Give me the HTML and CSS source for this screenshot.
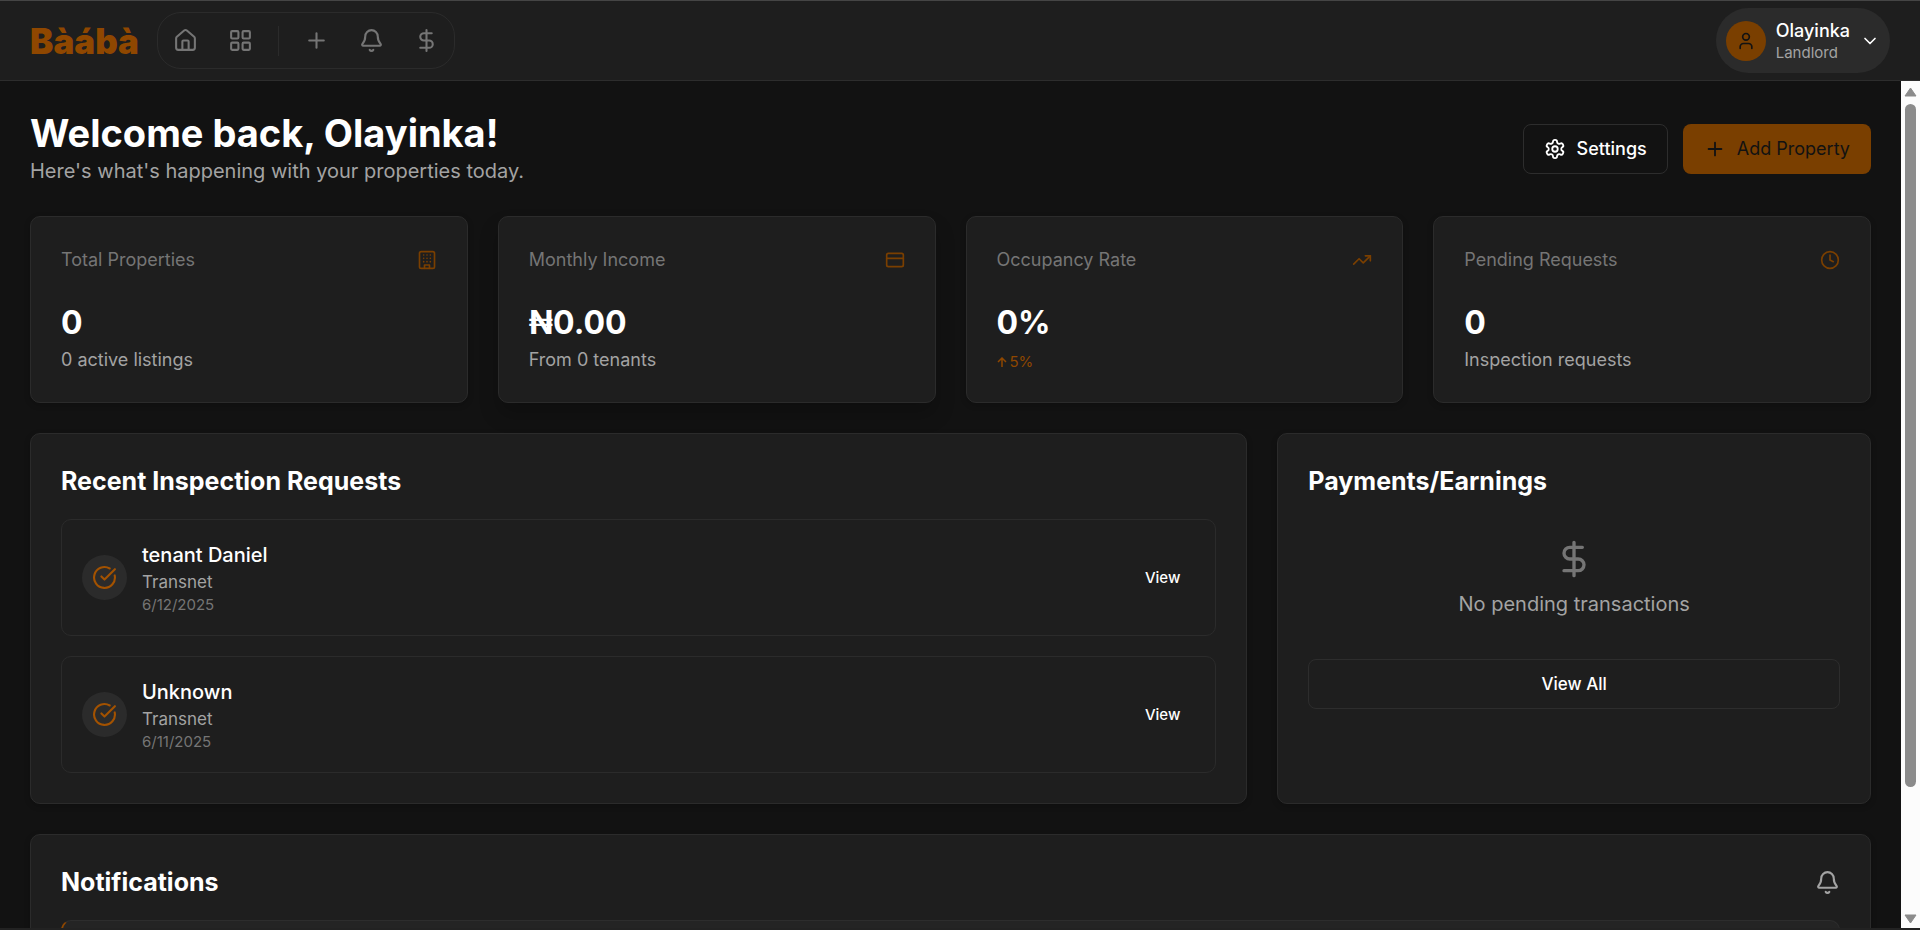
FILE: index.html
```
<!DOCTYPE html>
<html lang="en">
<head>
    <meta charset="UTF-8">
    <meta name="viewport" content="width=device-width, initial-scale=1.0">
    <title>Bàábà - Landlord Dashboard</title>
    <link rel="stylesheet" href="styles.css">
</head>
<body>
    <!-- shared icons -->
    <svg class="icon-defs" aria-hidden="true">
        <symbol id="icon-plus" viewBox="0 0 24 24"><path d="M5 12h14M12 5v14"/></symbol>
        <symbol id="icon-bell" viewBox="0 0 24 24"><path d="M10.27 21a2 2 0 0 0 3.46 0"/><path d="M3.26 15.33A1 1 0 0 0 4 17h16a1 1 0 0 0 .74-1.67C19.41 13.96 18 12.5 18 8A6 6 0 0 0 6 8c0 4.5-1.41 5.96-2.74 7.33"/></symbol>
        <symbol id="icon-dollar" viewBox="0 0 24 24"><path d="M12 2v20M17 5H9.5a3.5 3.5 0 0 0 0 7h5a3.5 3.5 0 0 1 0 7H6"/></symbol>
        <symbol id="icon-check" viewBox="0 0 24 24"><path d="M21.8 10A10 10 0 1 1 17 3.34"/><path d="m9 11 3 3L22 4"/></symbol>
    </svg>

    <header class="topbar">
        <a href="#" class="logo">Bàábà</a>
        <nav class="nav-pill" aria-label="Main">
            <a href="#" class="nav-btn" aria-label="Home">
                <svg class="icon" viewBox="0 0 24 24"><path d="M15 21v-8a1 1 0 0 0-1-1h-4a1 1 0 0 0-1 1v8"/><path d="M3 10a2 2 0 0 1 .71-1.53l7-6a2 2 0 0 1 2.58 0l7 6A2 2 0 0 1 21 10v9a2 2 0 0 1-2 2H5a2 2 0 0 1-2-2z"/></svg>
            </a>
            <a href="#" class="nav-btn" aria-label="Dashboard">
                <svg class="icon" viewBox="0 0 24 24"><rect x="3" y="3" width="7" height="7" rx="1"/><rect x="14" y="3" width="7" height="7" rx="1"/><rect x="3" y="14" width="7" height="7" rx="1"/><rect x="14" y="14" width="7" height="7" rx="1"/></svg>
            </a>
            <span class="nav-divider"></span>
            <a href="#" class="nav-btn" aria-label="Add property"><svg class="icon"><use href="#icon-plus"/></svg></a>
            <a href="#" class="nav-btn" aria-label="Notifications"><svg class="icon"><use href="#icon-bell"/></svg></a>
            <a href="#" class="nav-btn" aria-label="Payments"><svg class="icon"><use href="#icon-dollar"/></svg></a>
        </nav>
        <button type="button" class="user-menu">
            <span class="avatar">
                <svg class="icon icon-sm" viewBox="0 0 24 24"><path d="M19 21v-2a4 4 0 0 0-4-4H9a4 4 0 0 0-4 4v2"/><circle cx="12" cy="7" r="4"/></svg>
            </span>
            <span class="user-info">
                <span class="user-name">Olayinka</span>
                <span class="user-role">Landlord</span>
            </span>
            <svg class="icon icon-sm" viewBox="0 0 24 24"><path d="m6 9 6 6 6-6"/></svg>
        </button>
    </header>

    <div class="viewport">
        <main class="content">
            <section class="welcome">
                <div>
                    <h1>Welcome back, Olayinka!</h1>
                    <p class="subtitle">Here's what's happening with your properties today.</p>
                </div>
                <div class="actions">
                    <button type="button" class="btn btn-outline">
                        <svg class="icon icon-md" viewBox="0 0 24 24"><path d="M12.22 2h-.44a2 2 0 0 0-2 2v.18a2 2 0 0 1-1 1.73l-.43.25a2 2 0 0 1-2 0l-.15-.08a2 2 0 0 0-2.73.73l-.22.38a2 2 0 0 0 .73 2.73l.15.1a2 2 0 0 1 1 1.72v.51a2 2 0 0 1-1 1.74l-.15.09a2 2 0 0 0-.73 2.73l.22.38a2 2 0 0 0 2.73.73l.15-.08a2 2 0 0 1 2 0l.43.25a2 2 0 0 1 1 1.73V20a2 2 0 0 0 2 2h.44a2 2 0 0 0 2-2v-.18a2 2 0 0 1 1-1.73l.43-.25a2 2 0 0 1 2 0l.15.08a2 2 0 0 0 2.73-.73l.22-.39a2 2 0 0 0-.73-2.73l-.15-.08a2 2 0 0 1-1-1.74v-.5a2 2 0 0 1 1-1.74l.15-.09a2 2 0 0 0 .73-2.73l-.22-.38a2 2 0 0 0-2.73-.73l-.15.08a2 2 0 0 1-2 0l-.43-.25a2 2 0 0 1-1-1.73V4a2 2 0 0 0-2-2z"/><circle cx="12" cy="12" r="3"/></svg>
                        Settings
                    </button>
                    <button type="button" class="btn btn-primary">
                        <svg class="icon icon-md"><use href="#icon-plus"/></svg>
                        Add Property
                    </button>
                </div>
            </section>

            <section class="stats">
                <article class="card stat">
                    <div class="stat-head">
                        <h2>Total Properties</h2>
                        <svg class="icon icon-sm" viewBox="0 0 24 24"><rect x="3" y="2" width="18" height="20" rx="2"/><path d="M9 22v-4h6v4M8 6h.01M12 6h.01M16 6h.01M8 10h.01M12 10h.01M16 10h.01M8 14h.01M12 14h.01M16 14h.01"/></svg>
                    </div>
                    <p class="stat-value">0</p>
                    <p class="stat-note">0 active listings</p>
                </article>
                <article class="card stat stat-raised">
                    <div class="stat-head">
                        <h2>Monthly Income</h2>
                        <svg class="icon icon-sm" viewBox="0 0 24 24"><rect x="2" y="4" width="20" height="16" rx="2"/><path d="M2 10h20"/></svg>
                    </div>
                    <p class="stat-value">₦0.00</p>
                    <p class="stat-note">From 0 tenants</p>
                </article>
                <article class="card stat">
                    <div class="stat-head">
                        <h2>Occupancy Rate</h2>
                        <svg class="icon icon-sm" viewBox="0 0 24 24"><path d="M22 7l-8.5 8.5-5-5L2 17"/><path d="M16 7h6v6"/></svg>
                    </div>
                    <p class="stat-value">0%</p>
                    <p class="stat-trend">
                        <svg class="trend-arrow" viewBox="0 0 10 10"><path d="M5 10V1M1 5l4-4 4 4"/></svg>
                        5%
                    </p>
                </article>
                <article class="card stat">
                    <div class="stat-head">
                        <h2>Pending Requests</h2>
                        <svg class="icon icon-sm" viewBox="0 0 24 24"><circle cx="12" cy="12" r="10"/><path d="M12 6v6l4 2"/></svg>
                    </div>
                    <p class="stat-value">0</p>
                    <p class="stat-note">Inspection requests</p>
                </article>
            </section>

            <div class="panels">
                <section class="card panel-wide">
                    <h2 class="panel-title">Recent Inspection Requests</h2>
                    <ul class="request-list">
                        <li class="request">
                            <span class="request-icon"><svg class="icon"><use href="#icon-check"/></svg></span>
                            <div class="request-info">
                                <h3>tenant Daniel</h3>
                                <p class="request-place">Transnet</p>
                                <p class="request-date">6/12/2025</p>
                            </div>
                            <button type="button" class="btn-view">View</button>
                        </li>
                        <li class="request">
                            <span class="request-icon"><svg class="icon"><use href="#icon-check"/></svg></span>
                            <div class="request-info">
                                <h3>Unknown</h3>
                                <p class="request-place">Transnet</p>
                                <p class="request-date">6/11/2025</p>
                            </div>
                            <button type="button" class="btn-view">View</button>
                        </li>
                    </ul>
                </section>

                <section class="card">
                    <h2 class="panel-title">Payments/Earnings</h2>
                    <div class="empty">
                        <svg class="icon icon-lg"><use href="#icon-dollar"/></svg>
                        <p>No pending transactions</p>
                    </div>
                    <button type="button" class="btn btn-outline btn-block">View All</button>
                </section>
            </div>

            <section class="card">
                <div class="notif-head">
                    <h2 class="panel-title">Notifications</h2>
                    <svg class="icon"><use href="#icon-bell"/></svg>
                </div>
                <div class="notif-item"></div>
            </section>
        </main>

        <div class="scrollbar" aria-hidden="true">
            <svg class="scroll-arrow" viewBox="0 0 13 10"><path d="M6.5 1 12 9H1z"/></svg>
            <div class="scroll-track"><div class="scroll-thumb"></div></div>
            <svg class="scroll-arrow" viewBox="0 0 13 10"><path d="M6.5 9 12 1H1z"/></svg>
        </div>
    </div>
</body>
</html>
```
FILE: styles.css
```
* {
    box-sizing: border-box;
    margin: 0;
    padding: 0;
}
body {
    display: flex;
    flex-direction: column;
    height: 100vh;
    overflow: hidden;
    border-top: 1px solid #454545;
    border-bottom: 2px solid #222222;
    background-color: #121212;
    color: #ffffff;
    font-family: Inter, "Noto Sans", sans-serif;
    font-size: 17px;
}
button {
    font-family: inherit;
    color: inherit;
    border: none;
    background: none;
    cursor: pointer;
}
a {
    color: inherit;
    text-decoration: none;
}
ul {
    list-style: none;
}

/* icons */
.icon-defs {
    display: none;
}
.icon {
    width: 25px;
    height: 25px;
    flex-shrink: 0;
    fill: none;
    stroke: currentColor;
    stroke-width: 2;
    stroke-linecap: round;
    stroke-linejoin: round;
}
.icon-sm {
    width: 20px;
    height: 20px;
}
.icon-md {
    width: 22px;
    height: 22px;
}
.icon-lg {
    width: 40px;
    height: 40px;
}

/* top bar */
.topbar {
    display: flex;
    align-items: center;
    flex-shrink: 0;
    height: 80px;
    padding: 0 30px;
    background-color: #1e1e1e;
    border-bottom: 1px solid #2d2d2d;
}
.logo {
    color: #8f4700;
    font-size: 35px;
    font-weight: 900;
    line-height: 40px;
    margin-right: 18px;
}
.nav-pill {
    display: flex;
    align-items: center;
    gap: 10px;
    padding: 5px;
    border: 1px solid #2b2b2b;
    border-radius: 24px;
    color: #757575;
}
.nav-btn {
    display: flex;
    padding: 10px;
}
.nav-divider {
    width: 1px;
    height: 30px;
    margin: 0 5px;
    background-color: #2b2b2b;
}
.user-menu {
    display: flex;
    align-items: center;
    gap: 10px;
    margin-left: auto;
    padding: 10px;
    border-radius: 33px;
    background-color: #2b2b2b;
    text-align: left;
}
.avatar {
    display: flex;
    align-items: center;
    justify-content: center;
    width: 40px;
    height: 40px;
    border-radius: 50%;
    background-color: #7a3f00;
    color: #121212;
}
.user-info {
    display: flex;
    flex-direction: column;
}
.user-name {
    font-size: 18px;
    font-weight: 500;
    line-height: 25px;
}
.user-role {
    font-size: 15px;
    line-height: 20px;
    color: #a3a3a3;
}

/* page */
.viewport {
    display: flex;
    flex: 1;
    min-height: 0;
}
.content {
    display: flex;
    flex-direction: column;
    gap: 30px;
    flex: 1;
    min-width: 0;
    padding: 30px;
    overflow-y: auto;
    scrollbar-width: none;
}
.content > * {
    flex-shrink: 0;
}
.scrollbar {
    display: flex;
    flex-direction: column;
    align-items: center;
    justify-content: space-between;
    width: 19px;
    padding: 6px 0 4px;
    background-color: #fcfcfc;
}
.scroll-arrow {
    width: 13px;
    height: 10px;
    fill: #8b8b8b;
    stroke: #8b8b8b;
    stroke-linejoin: round;
}
.scroll-track {
    flex: 1;
    width: 11px;
    margin: 7px 0;
}
.scroll-thumb {
    height: 85%;
    border-radius: 6px;
    background-color: #8b8b8b;
}
.welcome {
    display: flex;
    align-items: center;
    justify-content: space-between;
}
h1 {
    font-size: 38px;
    font-weight: 700;
    line-height: 45px;
}
.subtitle {
    font-size: 20px;
    line-height: 30px;
    color: #a3a3a3;
}
.actions {
    display: flex;
    gap: 15px;
}
.btn {
    display: flex;
    align-items: center;
    justify-content: center;
    gap: 11px;
    height: 50px;
    padding: 0 20px;
    border: 1px solid transparent;
    border-radius: 8px;
    font-size: 18px;
    font-weight: 500;
}
.btn-outline {
    border-color: #2d2d2d;
}
.btn-primary {
    background-color: #7a3f00;
    color: #121212;
    font-weight: 400;
}
.btn-block {
    width: 100%;
    margin-top: 20px;
    font-size: 17px;
}

/* cards */
.card {
    padding: 30px;
    border: 1px solid #2b2b2b;
    border-radius: 10px;
    background-color: #1e1e1e;
    box-shadow: 0 2px 6px rgba(0,0,0,0.2);
}
.stats {
    display: grid;
    grid-template-columns: repeat(4, 1fr);
    gap: 30px;
}
.stat-raised {
    box-shadow: 0 12px 20px rgba(0,0,0,0.2);
}
.stat-head {
    display: flex;
    align-items: center;
    justify-content: space-between;
    margin-bottom: 30px;
    color: #7a3f00;
}
.stat-head h2 {
    font-size: 18px;
    font-weight: 400;
    line-height: 26px;
    color: #757575;
}
.stat-value {
    font-size: 32px;
    font-weight: 700;
    line-height: 40px;
    margin-bottom: 4px;
}
.stat-note {
    font-size: 18px;
    line-height: 25px;
    color: #a3a3a3;
}
.stat-trend {
    display: flex;
    align-items: center;
    gap: 3px;
    padding-top: 5px;
    font-size: 15px;
    line-height: 20px;
    color: #8f4700;
}
.trend-arrow {
    width: 10px;
    height: 10px;
    fill: none;
    stroke: currentColor;
    stroke-width: 1.5;
}

/* panels */
.panels {
    display: grid;
    grid-template-columns: repeat(3, 1fr);
    gap: 30px;
}
.panel-wide {
    grid-column: span 2;
}
.panel-title {
    font-size: 25px;
    font-weight: 700;
    line-height: 35px;
}
.request-list {
    display: flex;
    flex-direction: column;
    gap: 20px;
    margin-top: 20px;
}
.request {
    display: flex;
    align-items: center;
    gap: 15px;
    padding: 20px;
    border: 1px solid #2b2b2b;
    border-radius: 10px;
}
.request-icon {
    display: flex;
    padding: 10px;
    border-radius: 50%;
    background-color: #2b2b2b;
    color: #a35200;
}
.request-info {
    flex: 1;
}
.request-info h3 {
    font-size: 20px;
    font-weight: 500;
    line-height: 30px;
}
.request-place {
    line-height: 25px;
    color: #a3a3a3;
}
.request-date {
    font-size: 15px;
    line-height: 20px;
    color: #757575;
}
.btn-view {
    padding: 8px 15px;
    font-size: 15px;
    font-weight: 500;
}
.empty {
    display: flex;
    flex-direction: column;
    align-items: center;
    gap: 10px;
    margin-top: 20px;
    padding: 20px 0;
    color: #757575;
}
.empty p {
    font-size: 20px;
    line-height: 30px;
    color: #a3a3a3;
}

/* notifications */
.notif-head {
    display: flex;
    align-items: center;
    justify-content: space-between;
    color: #a3a3a3;
}
.notif-head .panel-title {
    color: #ffffff;
}
.notif-item {
    min-height: 89px;
    margin-top: 20px;
    border: 1px solid #2d2d2d;
    border-left: 2px solid #8f4700;
    border-radius: 10px;
    background-color: #242424;
}
```
